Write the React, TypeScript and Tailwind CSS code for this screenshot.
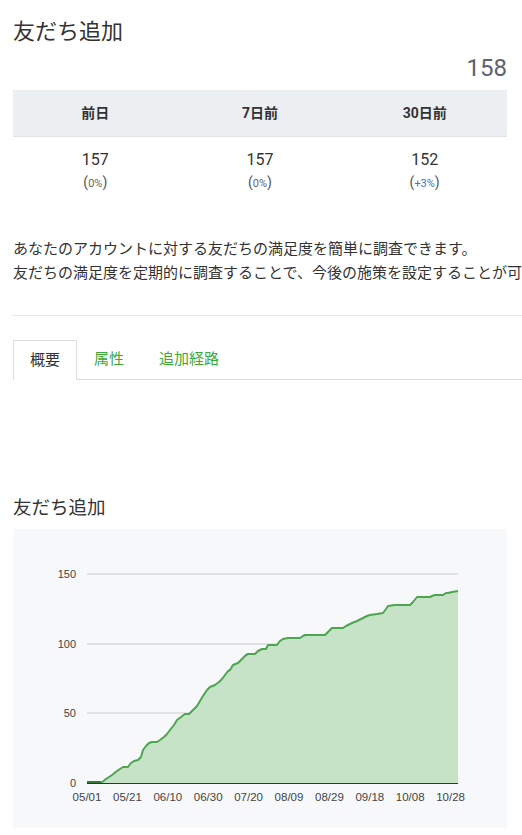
import React from "react";

const stats = [
  { label: "前日", value: "157", diff: "0%", up: false },
  { label: "7日前", value: "157", diff: "0%", up: false },
  { label: "30日前", value: "152", diff: "+3%", up: true },
];

// chart points in page coordinates (viewBox matches chart box)
const pts: [number, number][] = [
  [87, 782], [101, 782], [106, 778], [112, 774], [117, 770], [123, 766], [128, 766],
  [131, 762], [134, 760], [138, 759], [141, 756], [143, 749], [146, 745], [149, 742],
  [152, 741], [157, 741], [160, 739], [164, 736], [167, 733], [170, 729], [174, 724],
  [177, 719], [181, 716], [185, 713], [189, 713], [193, 709], [197, 705], [200, 700],
  [203, 695], [207, 689], [210, 686], [215, 684], [219, 681], [222, 678], [225, 674],
  [228, 670], [230, 669], [233, 664], [238, 662], [242, 658], [246, 654], [248, 653],
  [255, 653], [258, 650], [262, 648], [266, 648], [268, 644], [277, 644], [280, 640],
  [283, 638], [288, 637], [300, 637], [303, 635], [305, 634], [325, 634], [328, 631],
  [332, 627], [343, 627], [346, 625], [352, 622], [357, 620], [363, 617], [367, 615],
  [370, 614], [377, 613], [383, 612], [386, 608], [388, 605], [395, 604], [410, 604],
  [413, 601], [417, 596], [430, 596], [432, 595], [435, 594], [443, 594], [446, 592],
  [448, 592], [452, 591], [458, 590],
];

const xLabels = ["05/01", "05/21", "06/10", "06/30", "07/20", "08/09", "08/29", "09/18", "10/08", "10/28"];
const grid = [
  { v: "150", y: 573 },
  { v: "100", y: 643 },
  { v: "50", y: 712 },
  { v: "0", y: 782 },
];

const FriendsChart = () => {
  const line = pts.map((p) => p.join(",")).join(" ");
  const area = `${line} 458,782 87,782`;
  return (
    <svg width="494" height="299" viewBox="13 528 494 299" className="block">
      {grid.slice(0, 3).map((g) => (
        <line key={g.v} x1="87" x2="458" y1={g.y} y2={g.y} stroke="#cccccc" strokeWidth="1" />
      ))}
      <polygon points={area} fill="#c6e3c7" />
      <polyline points={line} fill="none" stroke="#4ca64f" strokeWidth="2" strokeLinejoin="round" />
      <line x1="87" x2="458" y1="782.5" y2="782.5" stroke="#333333" strokeWidth="1" />
      <line x1="87" x2="101" y1="781" y2="781" stroke="#2e7d32" strokeWidth="2" />
      {grid.map((g) => (
        <text
          key={g.v}
          x="76"
          y={g.y + 4}
          textAnchor="end"
          fontSize="11"
          fill="#444444"
          fontFamily='"Liberation Sans", Arial, sans-serif'
        >
          {g.v}
        </text>
      ))}
      {xLabels.map((l, i) => (
        <text
          key={l}
          x={87 + i * 40.4}
          y="800"
          textAnchor="middle"
          fontSize="11.5"
          fill="#444444"
          fontFamily='"Liberation Sans", Arial, sans-serif'
        >
          {l}
        </text>
      ))}
    </svg>
  );
};

export default function App() {
  return (
    <div
      className="w-[522px] h-[835px] bg-white pl-[13px] overflow-hidden text-[#333]"
      style={{ fontFamily: 'Roboto, "Noto Sans CJK JP", sans-serif' }}
    >
      {/* Header */}
      <h1 className="pt-[18px] text-[22px] leading-[28px] font-normal">友だち追加</h1>
      <div className="w-[494px] mt-[8px] text-right text-[24px] leading-[28px] text-[#5b6270]">158</div>

      {/* Stats table */}
      <div className="w-[494px] mt-[8px]">
        <div className="grid grid-cols-3 h-[47px] items-center bg-[#eceff1] border-b border-[#dfe3e6]">
          {stats.map((s) => (
            <div key={s.label} className="text-center text-[14px] font-bold text-[#333]">
              {s.label}
            </div>
          ))}
        </div>
        <div className="grid grid-cols-3 pt-[12px]">
          {stats.map((s) => (
            <div key={s.label} className="text-center">
              <div className="text-[16px] leading-[22px] text-[#333]">{s.value}</div>
              <div className="text-[14px] leading-[22px] text-[#555]">
                (<span className={s.up ? "text-[11px] text-[#4a6fc1]" : "text-[11px] text-[#666]"}>{s.diff}</span>)
              </div>
            </div>
          ))}
        </div>
      </div>

      {/* Description */}
      <div className="mt-[42px] text-[15px] leading-[24px] whitespace-nowrap text-[#333]">
        <p>あなたのアカウントに対する友だちの満足度を簡単に調査できます。</p>
        <p>友だちの満足度を定期的に調査することで、今後の施策を設定することが可能です。</p>
      </div>

      <div className="mt-[30px] border-t border-[#e6e6e6]" />

      {/* Tabs */}
      <div className="mt-[24px] flex text-[15px]">
        <div className="h-[40px] px-[16px] flex items-center border-l border-t border-r border-[#dddddd] bg-white text-[#333]">
          概要
        </div>
        <div className="h-[40px] px-[17px] flex items-center border-b border-[#dddddd] text-[#3aaa3a]">属性</div>
        <div className="h-[40px] px-[18px] flex items-center border-b border-[#dddddd] text-[#3aaa3a]">追加経路</div>
        <div className="flex-1 h-[40px] border-b border-[#dddddd]" />
      </div>

      {/* Chart */}
      <h2 className="mt-[116px] text-[18.5px] leading-[24px] font-normal text-[#333]">友だち追加</h2>
      <div className="mt-[9px] w-[494px] h-[299px] bg-[#f7f8fa]">
        <FriendsChart />
      </div>
    </div>
  );
}
